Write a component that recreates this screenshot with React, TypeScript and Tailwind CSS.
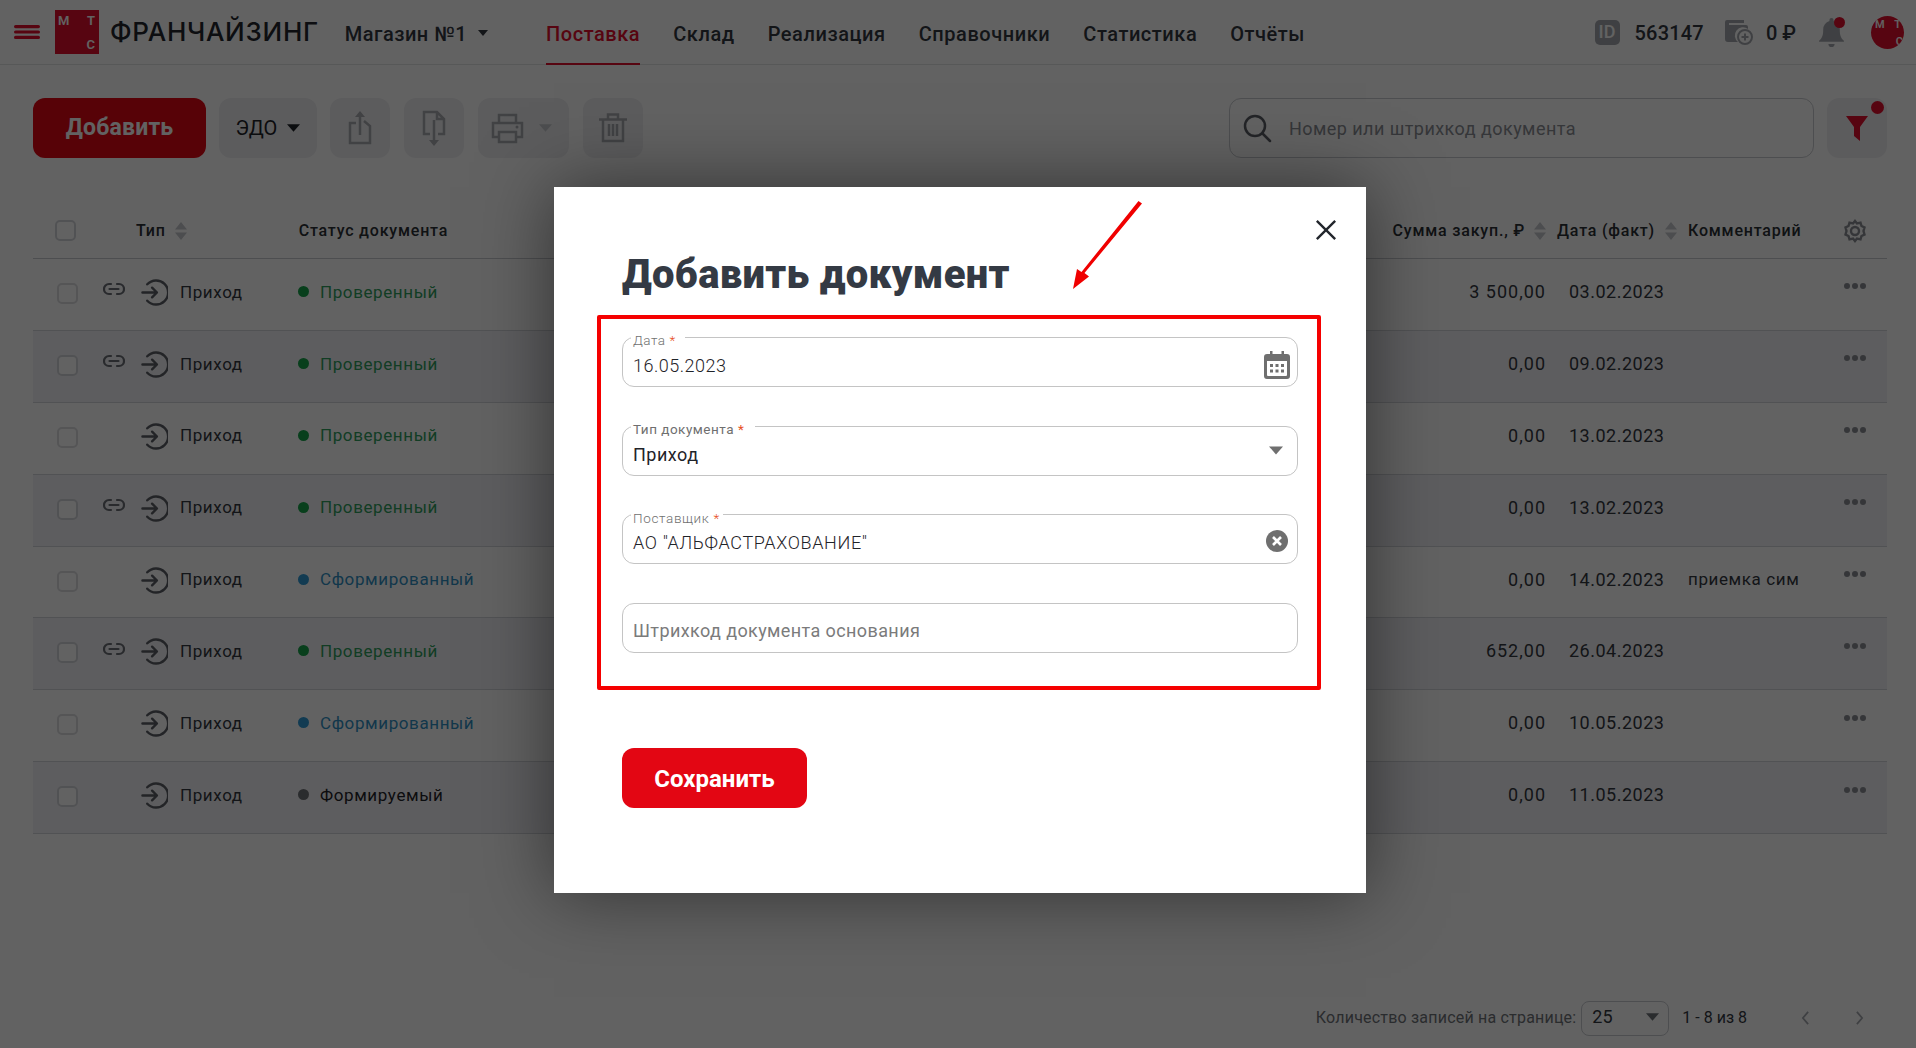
import React from "react";

type Doc = {
  linked: boolean;
  status: string;
  dot: string;
  text: string;
  sum: string;
  date: string;
  comment?: string;
};

const docs: Doc[] = [
  { linked: true, status: "Проверенный", dot: "bg-[#16a34a]", text: "text-[#2f9e5e]", sum: "3 500,00", date: "03.02.2023" },
  { linked: true, status: "Проверенный", dot: "bg-[#16a34a]", text: "text-[#2f9e5e]", sum: "0,00", date: "09.02.2023" },
  { linked: false, status: "Проверенный", dot: "bg-[#16a34a]", text: "text-[#2f9e5e]", sum: "0,00", date: "13.02.2023" },
  { linked: true, status: "Проверенный", dot: "bg-[#16a34a]", text: "text-[#2f9e5e]", sum: "0,00", date: "13.02.2023" },
  { linked: false, status: "Сформированный", dot: "bg-[#2f9bd6]", text: "text-[#2f8fc4]", sum: "0,00", date: "14.02.2023", comment: "приемка сим" },
  { linked: true, status: "Проверенный", dot: "bg-[#16a34a]", text: "text-[#2f9e5e]", sum: "652,00", date: "26.04.2023" },
  { linked: false, status: "Сформированный", dot: "bg-[#2f9bd6]", text: "text-[#2f8fc4]", sum: "0,00", date: "10.05.2023" },
  { linked: false, status: "Формируемый", dot: "bg-[#6f7278]", text: "text-[#1f2329]", sum: "0,00", date: "11.05.2023" },
];

const navItems = ["Склад", "Реализация", "Справочники", "Статистика", "Отчёты"];

const Caret = ({ className = "" }: { className?: string }) => (
  <svg viewBox="0 0 12 7" className={className} fill="currentColor">
    <path d="M0 0h12L6 7z" />
  </svg>
);

const SortIcon = () => (
  <svg viewBox="0 0 12 18" className="w-3 h-[18px] text-[#c6c8cd]" fill="currentColor">
    <path d="M6 0l6 7.500H0zM6 18L0 10.500h12z" />
  </svg>
);

const LogoMark = ({ round }: { round?: boolean }) => (
  <div
    className={`relative overflow-hidden bg-[#e30f2d] text-white font-semibold ${
      round ? "w-[33px] h-[33px] rounded-full text-[11px]" : "w-11 h-11 text-[13px]"
    }`}
  >
    <span className={`absolute leading-none ${round ? "left-[4px] top-[3px]" : "left-[3px] top-[4px]"}`}>М</span>
    <span className={`absolute leading-none ${round ? "right-[3px] top-[3px]" : "right-[4px] top-[4px]"}`}>Т</span>
    <span className={`absolute leading-none ${round ? "right-[1px] bottom-[2px]" : "right-[4px] bottom-[3px]"}`}>С</span>
  </div>
);

const ToolButton = ({ children, className = "w-[60px]" }: { children: React.ReactNode; className?: string }) => (
  <div className={`h-[60px] rounded-xl bg-[#f0f0f3] flex items-center justify-center ${className}`}>{children}</div>
);

const LinkIcon = () => (
  <svg viewBox="0 0 22 14" className="w-[22px] h-[14px] text-[#6b6f76]" fill="none" stroke="currentColor" strokeWidth="2.200" strokeLinecap="round">
    <path d="M8 2H6a5 5 0 0 0 0 10h2M14 2h2a5 5 0 0 1 0 10h-2M6.500 7h9" />
  </svg>
);

const IncomeIcon = () => (
  <svg viewBox="0 0 28 28" className="w-[27px] h-[27px] -ml-px text-[#5b5f66]" fill="none" stroke="currentColor" strokeWidth="2.500" strokeLinecap="round" strokeLinejoin="round">
    <path d="M6.500 5.500A12.500 12.500 0 1 1 6.500 22.500" />
    <path d="M1.500 14h15M11.500 9l5 5-5 5" />
  </svg>
);

const Checkbox = ({ className = "" }: { className?: string }) => (
  <div className={`w-[21px] h-[21px] rounded-[5px] border-2 border-[#d4d6da] bg-white ${className}`} />
);

const FieldLabel = ({ text, notch }: { text: string; notch: string }) => (
  <div className={`absolute left-2 -top-[4px] h-[14px] pl-[2px] bg-white flex items-center text-[13.5px] leading-none text-[#6f6f6f] ${notch}`}>
    {text}
    <span className="ml-1 text-[#e8501f]">*</span>
  </div>
);

export default function App() {
  return (
    <div className="relative h-screen overflow-hidden bg-white flex flex-col font-['Roboto',sans-serif] text-[#1f2329]">
      <header className="h-[65px] shrink-0 border-b border-[#e3e4e6] flex items-center pl-[14px] pr-[12px]">
        <svg viewBox="0 0 26 14" className="w-[26px] h-[14px] text-[#e30f2d] mr-[15px]" fill="currentColor">
          <rect width="26" height="3.200" rx="1.600" />
          <rect y="5.400" width="26" height="3.200" rx="1.600" />
          <rect y="10.800" width="26" height="3.200" rx="1.600" />
        </svg>
        <LogoMark />
        <span className="ml-[11px] font-['Inter',sans-serif] font-medium text-[26px] tracking-[0.72px] text-[#22262c] mb-[2px]">ФРАНЧАЙЗИНГ</span>
        <span className="ml-[26px] mt-[3px] text-[20px] font-medium text-[#33383f] tracking-[0.5px]">Магазин №1</span>
        <Caret className="ml-[11px] mt-[2px] w-[10px] h-[6px] text-[#33383f]" />
        <nav className="ml-[58px] flex self-stretch items-center gap-[33px] text-[20px] font-medium text-[#33383f] tracking-[0.55px]">
          <span className="h-full flex items-center pt-[4px] text-[#e30f2d] border-b-2 border-[#e30f2d] -mb-px">Поставка</span>
          {navItems.map((n) => (
            <span key={n} className="pt-[3px]">{n}</span>
          ))}
        </nav>
        <div className="ml-auto flex items-center">
          <div className="w-[25px] h-[25px] rounded-[5px] bg-[#a5a8ae] flex items-center justify-center text-white text-[18px] font-medium leading-none">
            ID
          </div>
          <span className="ml-[15px] mt-[2px] text-[20px] font-medium text-[#33383f] tracking-[0.2px]">563147</span>
          <svg viewBox="0 0 28 26" className="ml-[21px] w-7 h-[26px] text-[#a5a8ae]" fill="currentColor">
            <path d="M2 1h17v3H4v2h17a2 2 0 0 1 2 2v2a8 8 0 0 0-10 13H3a3 3 0 0 1-3-3V3a2 2 0 0 1 2-2z" />
            <circle cx="20" cy="18" r="7" fill="none" stroke="currentColor" strokeWidth="2" />
            <path d="M20 14.500v7M16.500 18h7" stroke="currentColor" strokeWidth="2" />
          </svg>
          <span className="ml-[13px] mt-[2px] text-[20px] font-medium text-[#33383f]">0 ₽</span>
          <div className="relative ml-[23px] w-[25px] h-[29px]">
            <svg viewBox="0 0 24 28" className="w-[25px] h-[29px] text-[#a5a8ae]" fill="currentColor">
              <path d="M12 0a2 2 0 0 1 2 2v1a8 8 0 0 1 6 8c0 6 1 8 4 11v1H0v-1c3-3 4-5 4-11a8 8 0 0 1 6-8V2a2 2 0 0 1 2-2zM9 25h6a3 3 0 0 1-6 0z" />
            </svg>
            <div className="absolute right-[-1px] top-[-1px] w-[11px] h-[11px] rounded-full bg-[#e30f2d]" />
          </div>
          <div className="ml-[27px]">
            <LogoMark round />
          </div>
        </div>
      </header>

      <div className="pl-[33px] pr-[29px] pt-[33px] flex items-center">
        <div className="w-[173px] h-[60px] rounded-xl bg-[#e30613] flex items-center justify-center text-[23px] font-bold text-white tracking-[0.2px]">
          Добавить
        </div>
        <ToolButton className="ml-[13px] w-[98px] gap-[10px] text-[#1f2329]">
          <span className="text-[20px] leading-none">ЭДО</span>
          <Caret className="w-[13px] h-2" />
        </ToolButton>
        <ToolButton className="ml-[13px] w-[60px] text-[#a9abb0]">
          <svg viewBox="0 0 24 34" className="w-6 h-[34px]" fill="none" stroke="currentColor" strokeWidth="2.500">
            <path d="M8 12H2v20h20V15l-6-5M12 24V4" />
            <path d="M12 0l5 6H7z" fill="currentColor" stroke="none" />
          </svg>
        </ToolButton>
        <ToolButton className="ml-[14px] w-[60px] text-[#a9abb0]">
          <svg viewBox="0 0 24 36" className="w-6 h-9" fill="none" stroke="currentColor" strokeWidth="2.500">
            <path d="M8 24H2V2h13l7 7v15h-6M15 2v7h7M12 10v20" />
            <path d="M12 36l-5-6h10z" fill="currentColor" stroke="none" />
          </svg>
        </ToolButton>
        <ToolButton className="ml-[14px] w-[91px] gap-[15px] pr-[5px] text-[#a9abb0]">
          <svg viewBox="0 0 33 31" className="w-[33px] h-[31px]" fill="none" stroke="currentColor" strokeWidth="2.500">
            <path d="M8 10V2h17v8M8 24H2V10h29v14h-6M8 19h17v10H8z" />
            <circle cx="26" cy="14" r="1.500" fill="currentColor" stroke="none" />
          </svg>
          <Caret className="w-[13px] h-2 text-[#c6c8cd]" />
        </ToolButton>
        <ToolButton className="ml-[14px] w-[60px] text-[#a9abb0]">
          <svg viewBox="0 0 28 30" className="w-7 h-[30px]" fill="none" stroke="currentColor" strokeWidth="2.500">
            <path d="M0 6.500h28M9 6V1.500h10V6M4 7v21h20V7M10 11v12M14 11v12M18 11v12" />
          </svg>
        </ToolButton>
        <div className="ml-auto w-[585px] h-[60px] rounded-xl border border-[#c9cbd0] flex items-center pl-[12px]">
          <svg viewBox="0 0 30 30" className="w-[30px] h-[30px] text-[#5b5f66]" fill="none" stroke="currentColor" strokeWidth="2.500" strokeLinecap="round">
            <circle cx="13" cy="13" r="10" />
            <path d="M20.500 20.500L28 28" />
          </svg>
          <span className="ml-[17px] text-[18px] text-[#8b8e94] tracking-[0.45px]">Номер или штрихкод документа</span>
        </div>
        <div className="relative ml-[13px] w-[60px] h-[60px] rounded-xl bg-[#f0f0f3] flex items-center justify-center">
          <svg viewBox="0 0 22 25" className="w-[22px] h-[25px] text-[#e30f2d]" fill="currentColor">
            <path d="M0 0h22l-8 11v14l-6-5v-9z" />
          </svg>
          <div className="absolute right-[3px] top-[3px] w-[13px] h-[13px] rounded-full bg-[#e30f2d]" />
        </div>
      </div>

      <div className="ml-[33px] mr-[29px] mt-[47px]">
        <div className="h-[54px] pb-[2px] border-b border-[#c9cbd0] flex items-center text-[16px] font-medium tracking-[0.8px] text-[#2b2f35]">
          <div className="w-[103px] pl-[22px]">
            <Checkbox />
          </div>
          <span>Тип</span>
          <span className="ml-[9px]"><SortIcon /></span>
          <span className="ml-[112px]">Статус документа</span>
          <div className="ml-auto flex items-center">
            <span>Сумма закуп., ₽</span>
            <span className="ml-[9px]"><SortIcon /></span>
            <span className="ml-[11px]">Дата (факт)</span>
            <span className="ml-[10px]"><SortIcon /></span>
            <span className="ml-[11px] w-[152px]">Комментарий</span>
            <div className="w-[47px]">
              <svg viewBox="0 0 24 24" className="ml-[3px] w-6 h-6 text-[#8b8e94]" fill="none" stroke="currentColor" strokeWidth="2.400">
                <circle cx="12" cy="12" r="4" />
                <path d="M12 2l2 2.500 3.500-.8 1 3.300 3 1.500-1 3.500 1 3.500-3 1.500-1 3.300-3.500-.8L12 22l-2-2.500-3.500.8-1-3.300-3-1.500 1-3.500-1-3.500 3-1.500 1-3.300 3.500.8z" />
              </svg>
            </div>
          </div>
        </div>
        {docs.map((d, i) => (
          <div
            key={i}
            className={`h-[71.9px] border-b border-[#d4d6da] flex items-center pb-[4px] text-[17px] tracking-[0.6px] text-[#33383f] ${
              i % 2 === 1 ? "bg-[#f3f3f6]" : ""
            }`}
          >
            <div className="w-[70px] pl-[24px] pt-[2px]">
              <Checkbox className={i % 2 === 1 ? "" : "border-[#dcdde0]"} />
            </div>
            <div className="w-[39px] mb-[6px]">{d.linked && <LinkIcon />}</div>
            <div className="w-[38px] flex">
              <IncomeIcon />
            </div>
            <span className="w-[118px]">Приход</span>
            <div className={`w-[11px] h-[11px] rounded-full mb-[2px] ${d.dot}`} />
            <span className={`ml-[11px] ${d.text}`}>{d.status}</span>
            <div className="ml-auto flex items-center">
              <span className="mb-[2px] text-right text-[18px] tracking-[1px]">{d.sum}</span>
              <span className="mb-[2px] ml-[23px] w-[119px] text-[18px] tracking-[0.5px]">{d.date}</span>
              <span className="w-[152px]">{d.comment}</span>
              <div className="w-[47px] flex gap-[2px] pl-[4px] mb-[12px]">
                <div className="w-[6px] h-[6px] rounded-full bg-[#8b8e94]" />
                <div className="w-[6px] h-[6px] rounded-full bg-[#8b8e94]" />
                <div className="w-[6px] h-[6px] rounded-full bg-[#8b8e94]" />
              </div>
            </div>
          </div>
        ))}
      </div>

      <div className="mt-auto h-[64px] pr-[52px] pt-[4px] flex items-center justify-end text-[16px]">
        <span className="text-[#6f7278] tracking-[0.2px]">Количество записей на странице:</span>
        <div className="ml-[5px] w-[88px] h-[35px] rounded-lg border border-[#c9cbd0] flex items-center justify-between pl-[10px] pr-[9px] pb-[3px] text-[18px] text-[#33383f]">
          25
          <Caret className="w-[13px] h-2 text-[#6f7278]" />
        </div>
        <span className="ml-[13px] text-[#33383f]">1 - 8 из 8</span>
        <svg viewBox="0 0 10 16" className="ml-[54px] w-[9px] h-[14px] text-[#a5a8ae]" fill="none" stroke="currentColor" strokeWidth="2">
          <path d="M8 1L2 8l6 7" />
        </svg>
        <svg viewBox="0 0 10 16" className="ml-[45px] w-[9px] h-[14px] text-[#a5a8ae]" fill="none" stroke="currentColor" strokeWidth="2">
          <path d="M2 1l6 7-6 7" />
        </svg>
      </div>

      {/* overlay + modal */}
      <div className="absolute inset-0 bg-black/[.615] flex items-start justify-center pt-[187px] pl-[4px]">
        <div className="relative w-[812px] h-[706px] bg-white shadow-[0_0_70px_rgba(0,0,0,0.5)] flex flex-col pl-[43px]">
          <svg viewBox="0 0 24 24" className="absolute right-[29px] top-[32px] w-[22px] h-[22px] text-[#22262c]" fill="none" stroke="currentColor" strokeWidth="2.600">
            <path d="M2 2l20 20M22 2L2 22" />
          </svg>
          <svg viewBox="0 0 70 90" className="absolute left-[518px] top-[14px] w-[70px] h-[90px] text-[#f00000]" fill="currentColor">
            <path d="M66.500 0l3.500 2.500L12.500 72l4.500 3.500L1 88l4-20 4.500 3z" />
          </svg>
          <h2 className="ml-[25px] mt-[63px] text-[40px] leading-[50px] font-black tracking-[0.3px] text-[#343a44]">Добавить документ</h2>
          <div className="mt-[15px] w-[724px] h-[375px] border-4 border-[#f50000] rounded-[2px] pl-[21px] pr-[19px] pt-[18px] flex flex-col gap-[38.7px]">
            <div className="relative h-[50px] shrink-0 rounded-xl border border-[#c4c4c4] flex items-center pl-[10px] pr-[7px] pt-[6px] text-[18px] font-light tracking-[0.5px] text-[#1f2329]">
              <FieldLabel text="Дата" notch="w-[54px]" />
              16.05.2023
              <svg viewBox="0 0 26 28" className="ml-auto w-[26px] h-[28px] text-[#6f6f6f]" fill="currentColor">
                <path d="M6 0h2.500v3h9V0H20v3h3a3 3 0 0 1 3 3v19a3 3 0 0 1-3 3H3a3 3 0 0 1-3-3V6a3 3 0 0 1 3-3h3zM3 10v14a1 1 0 0 0 1 1h18a1 1 0 0 0 1-1V10z" />
                <path d="M6 13h3v3H6zM11.500 13h3v3h-3zM17 13h3v3h-3zM6 18.500h3v3H6zM11.500 18.500h3v3h-3zM17 18.500h3v3h-3z" />
              </svg>
            </div>
            <div className="relative h-[50px] shrink-0 rounded-xl border border-[#c4c4c4] flex items-center pl-[10px] pr-[14px] pt-[7px] text-[18px] tracking-[0.5px] text-[#1f2329]">
              <FieldLabel text="Тип документа" notch="w-[124px]" />
              Приход
              <Caret className="ml-auto mb-[8px] w-[14px] h-[9px] text-[#6f6f6f]" />
            </div>
            <div className="relative h-[50px] shrink-0 rounded-xl border border-[#c4c4c4] flex items-center pl-[10px] pr-[9px] pt-[7px] text-[18px] font-light tracking-[0.65px] text-[#1f2329]">
              <FieldLabel text="Поставщик" notch="w-[92px]" />
              АО "АЛЬФАСТРАХОВАНИЕ"
              <div className="ml-auto mb-[4px] w-[22px] h-[22px] rounded-full bg-[#6f6f6f] flex items-center justify-center">
                <svg viewBox="0 0 10 10" className="w-[10px] h-[10px] text-white" fill="none" stroke="currentColor" strokeWidth="2.600">
                  <path d="M1 1l8 8M9 1L1 9" />
                </svg>
              </div>
            </div>
            <div className="h-[50px] shrink-0 rounded-xl border border-[#c4c4c4] flex items-center pl-[10px] pt-[5px] text-[18px] tracking-[0.4px] text-[#7b7b7b]">
              Штрихкод документа основания
            </div>
          </div>
          <div className="ml-[25px] mt-[58px] w-[185px] h-[60px] pt-[2px] rounded-xl bg-[#e30613] flex items-center justify-center text-[24px] font-bold text-white">
            Сохранить
          </div>
        </div>
      </div>
    </div>
  );
}
